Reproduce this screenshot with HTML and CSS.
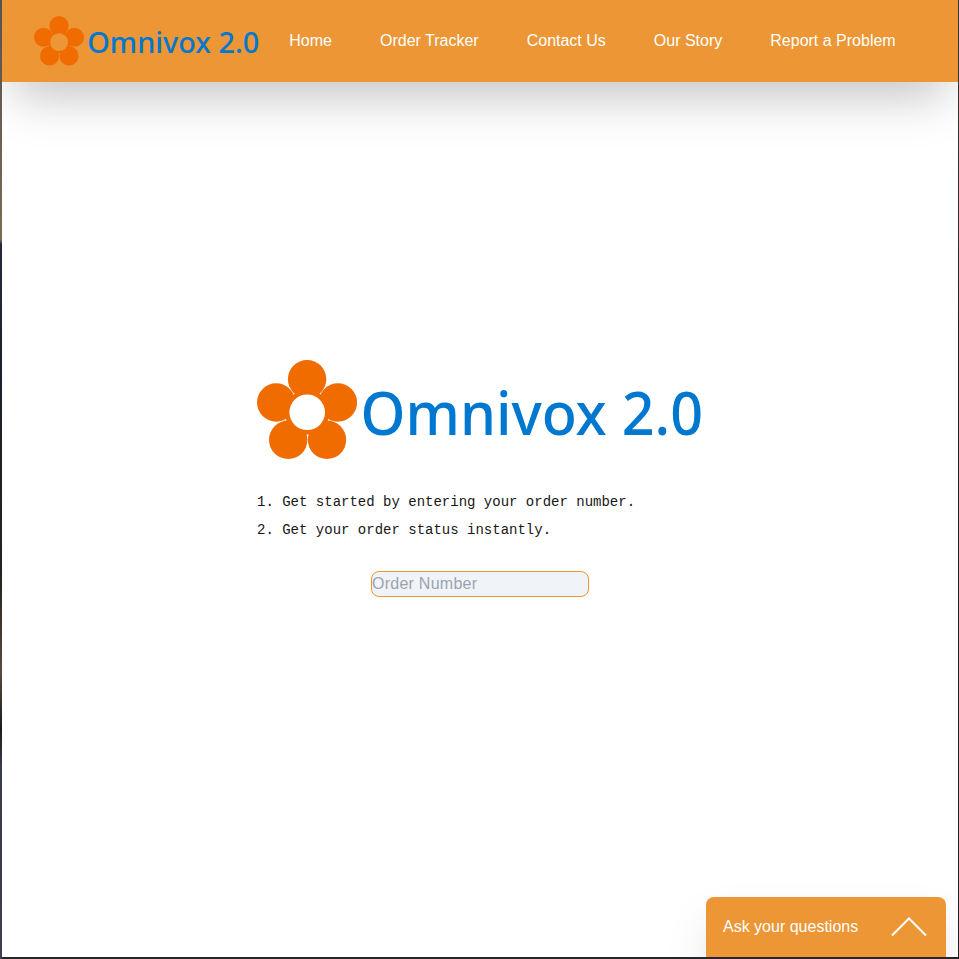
FILE: index.html
```html
<!DOCTYPE html>
<html lang="en">
<head>
  <meta charset="utf-8">
  <title>Omnivox 2.0</title>
  <link rel="stylesheet" href="styles.css">
</head>
<body>
  <svg class="defs" width="0" height="0" aria-hidden="true">
    <defs>
      <mask id="hole">
        <rect width="100" height="100" fill="#fff"/>
        <circle cx="50.2" cy="52.3" r="17.8" fill="#000"/>
      </mask>
      <g id="flower" fill="#f06c00" mask="url(#hole)">
        <circle cx="50.1" cy="19.2" r="19.2"/>
        <circle cx="80.9" cy="42.5" r="19.2"/>
        <circle cx="70" cy="79.8" r="19.2"/>
        <circle cx="31.2" cy="79.8" r="19.2"/>
        <circle cx="19.2" cy="42.5" r="19.2"/>
        <circle cx="50.2" cy="52.3" r="22.3"/>
      </g>
    </defs>
  </svg>
  <div class="app">
    <header class="header">
      <svg class="brand" viewBox="0 0 446 100">
        <use href="#flower"/>
        <text class="wordmark" x="106.5" y="74" textLength="344" lengthAdjust="spacingAndGlyphs">Omnivox 2.0</text>
      </svg>
      <nav class="nav">
        <a>Home</a>
        <a>Order Tracker</a>
        <a>Contact Us</a>
        <a>Our Story</a>
        <a>Report a Problem</a>
      </nav>
    </header>
    <main class="main">
      <div class="intro">
        <svg class="hero" viewBox="0 0 446 100">
          <use href="#flower"/>
          <text class="wordmark" x="103.5" y="75.2" textLength="342.5" lengthAdjust="spacingAndGlyphs">Omnivox 2.0</text>
        </svg>
        <ol class="steps">
          <li>Get started by entering your order number.</li>
          <li>Get your order status instantly.</li>
        </ol>
        <input class="order" type="text" placeholder="Order Number">
      </div>
    </main>
    <button class="chat" type="button">
      <span>Ask your questions</span>
      <svg class="chevron" viewBox="0 0 36 20"><path d="M1 18.5 18 1.5 35 18.5"/></svg>
    </button>
  </div>
</body>
</html>
```
FILE: styles.css
```css
* {
  box-sizing: border-box;
}

body {
  margin: 0;
  height: 959px;
  padding: 0 1px 2px 2px;
  overflow: hidden;
  font: 16px/24px "Liberation Sans", Arial, sans-serif;
  color: #171717;
  background:
    linear-gradient(#3b3230, #33292b 25%, #20201f 35%, #20201f) right / 1px 100% no-repeat,
    linear-gradient(#555250, #756653 20%, #7a6a50 25%, #25283a 25.5%, #1d2029 40%, #25211f 60%, #5a4a3e 70%, #1c1c1e 76%, #3a3b48 80%, #40404c) left / 2px 100% no-repeat,
    #28252a;
}

.defs {
  position: absolute;
}

.app {
  position: relative;
  display: flex;
  flex-direction: column;
  height: 957px;
  overflow: hidden;
  background: #fff;
}

.header {
  display: flex;
  align-items: center;
  flex: none;
  height: 82px;
  padding-left: 32px;
  background: #ec9635;
  box-shadow: 0 25px 50px -12px rgb(0 0 0 / 25%);
}

.brand {
  width: 223px;
  height: 50px;
  overflow: visible;
}

.wordmark {
  font: 500 59px "Noto Sans", "Open Sans", sans-serif;
  fill: #0078cf;
}

.nav {
  display: flex;
  gap: 48px;
  margin-left: 32.3px;
  color: #fff;
  white-space: nowrap;
}

.main {
  display: flex;
  justify-content: center;
  padding-top: 278px;
}

.intro {
  display: flex;
  flex-direction: column;
  width: 446px;
}

.hero {
  width: 446px;
  height: 100px;
  overflow: visible;
}

.steps {
  display: grid;
  gap: 8px;
  margin: 32px 0;
  padding: 0;
  list-style: none;
  counter-reset: step;
  font: 14px/20px "Liberation Mono", monospace;
  white-space: pre;
}

.steps li::before {
  counter-increment: step;
  content: counter(step) ". ";
}

.order {
  align-self: center;
  width: 218px;
  height: 26px;
  margin-top: -1px;
  padding: 0;
  border: 1px solid #ec9635;
  border-radius: 8px;
  background: #f0f4f9;
  font: inherit;
  letter-spacing: 0.25px;
}

.order::placeholder {
  color: #9ca3af;
  opacity: 1;
}

.chat {
  position: absolute;
  right: 12px;
  bottom: 0;
  display: flex;
  align-items: center;
  justify-content: space-between;
  width: 240px;
  height: 60px;
  padding: 0 19px 0 17px;
  border: 0;
  border-radius: 8px 8px 0 0;
  background: #ec9635;
  box-shadow: 0 25px 50px -12px rgb(0 0 0 / 25%);
  color: #fff;
  font: inherit;
}

.chevron {
  width: 36px;
  height: 20px;
  fill: none;
  stroke: #fff;
  stroke-width: 2;
}
```
